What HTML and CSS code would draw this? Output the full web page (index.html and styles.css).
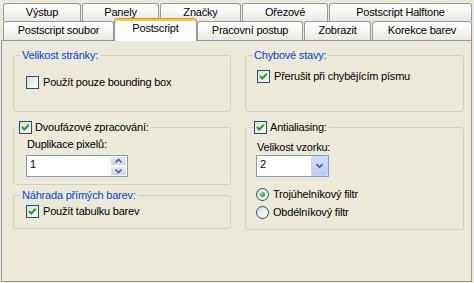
FILE: index.html
```html
<!DOCTYPE html>
<html>
<head>
<meta charset="utf-8">
<link rel="stylesheet" href="styles.css">
</head>
<body>
<div class="tabctl">
  <div class="tabrow row1">
    <div class="tab t-vystup">Výstup</div>
    <div class="tab t-panely">Panely</div>
    <div class="tab t-znacky">Značky</div>
    <div class="tab t-orez">Ořezové</div>
    <div class="tab t-half">Postscript Halftone</div>
  </div>
  <div class="tabrow row2">
    <div class="tab t-soubor">Postscript soubor</div>
    <div class="tab active t-ps">Postscript</div>
    <div class="tab t-prac">Pracovní postup</div>
    <div class="tab t-zobr">Zobrazit</div>
    <div class="tab t-kor">Korekce barev</div>
  </div>
  <div class="page">
    <div class="col">
      <fieldset class="grp g-size">
        <legend class="cap">Velikost stránky:</legend>
        <div class="body b-size">
          <label class="chk"><span class="box"></span>Použít pouze bounding box</label>
        </div>
      </fieldset>
      <fieldset class="grp g-two">
        <legend class="cap-chk l-two">
          <label class="chk tight"><span class="box"><svg viewBox="0 0 11 11"><polyline points="2,5 4.3,7.4 8.8,2.8"/></svg></span>Dvoufázové zpracování:</label>
        </legend>
        <div class="body b-two">
          <div class="lbl">Duplikace pixelů:</div>
          <div class="spin">
            <div class="val">1</div>
            <div class="btns">
              <div class="sbtn"><svg viewBox="0 0 15 8"><polyline points="4.5,5.5 7.5,2.5 10.5,5.5"/></svg></div>
              <div class="sbtn"><svg viewBox="0 0 15 8"><polyline points="4.5,2.5 7.5,5.5 10.5,2.5"/></svg></div>
            </div>
          </div>
        </div>
      </fieldset>
      <fieldset class="grp g-repl">
        <legend class="cap">Náhrada přímých barev:</legend>
        <div class="body b-repl">
          <label class="chk"><span class="box"><svg viewBox="0 0 11 11"><polyline points="2,5 4.3,7.4 8.8,2.8"/></svg></span>Použít tabulku barev</label>
        </div>
      </fieldset>
    </div>
    <div class="col">
      <fieldset class="grp g-err">
        <legend class="cap l-err">Chybové stavy:</legend>
        <div class="body b-err">
          <label class="chk"><span class="box"><svg viewBox="0 0 11 11"><polyline points="2,5 4.3,7.4 8.8,2.8"/></svg></span>Přerušit při chybějícím písmu</label>
        </div>
      </fieldset>
      <fieldset class="grp g-aa">
        <legend class="cap-chk l-aa">
          <label class="chk tight"><span class="box"><svg viewBox="0 0 11 11"><polyline points="2,5 4.3,7.4 8.8,2.8"/></svg></span>Antialiasing:</label>
        </legend>
        <div class="body b-aa">
          <div class="lbl">Velikost vzorku:</div>
          <div class="combo">
            <div class="val">2</div>
            <div class="dd"><svg viewBox="0 0 17 20"><polyline points="5,8 8.5,11.5 12,8"/></svg></div>
          </div>
          <label class="rad r1"><span class="dot on"></span>Trojúhelníkový filtr</label>
          <label class="rad r2"><span class="dot"></span>Obdélníkový filtr</label>
        </div>
      </fieldset>
    </div>
  </div>
</div>
</body>
</html>
```

FILE: styles.css
```css
* { box-sizing: border-box; }

body {
  margin: 0;
  width: 474px;
  height: 283px;
  overflow: hidden;
  background: #ECE9D8;
  font-family: "Liberation Sans", Arial, sans-serif;
  font-size: 11px;
  letter-spacing: -0.2px;
  color: #000;
}

.tabrow {
  display: flex;
  padding-left: 3px;
}

.row1 {
  padding-top: 3px;
  height: 21px;
}

.row2 {
  height: 19px;
  align-items: flex-end;
}

.tab {
  flex: none;
  text-align: center;
  white-space: nowrap;
  border: 1px solid #919B9C;
  border-bottom: none;
  border-radius: 3px 3px 0 0;
  background: linear-gradient(to bottom, #FFFFFF 0%, #F7F7F4 45%, #E9E8E1 100%);
}

.row1 .tab { height: 18px; line-height: 17px; }
.row2 .tab { height: 19px; line-height: 17px; }

.t-vystup { width: 78px; margin-right: 1px; }
.t-panely { width: 77px; margin-right: 1px; }
.t-znacky { width: 81px; margin-right: 1px; }
.t-orez { width: 86px; margin-right: 1px; }
.t-half { width: 143px; }

.t-soubor { width: 111px; }
.t-ps { width: 83px; }
.t-prac { width: 106px; margin-right: 1px; }
.t-zobr { width: 67px; margin-right: 1px; }
.t-kor { width: 100px; }

.row2 .tab.active {
  position: relative;
  z-index: 2;
  height: 23px;
  margin-bottom: -1px;
  line-height: 19px;
  background: #FCFCFE;
  border-top: 1px solid #E68B2C;
  box-shadow: inset 0 2px 0 #FFC73C;
}

.page {
  margin-left: 1px;
  width: 471px;
  height: 242px;
  border: 1px solid #919B9C;
  padding: 8px 0 0 11px;
  display: grid;
  grid-template-columns: 218px 219px;
  column-gap: 14px;
  align-items: start;
}

.col {
  display: flex;
  flex-direction: column;
}

.grp {
  margin: 0;
  padding: 0;
  min-width: 0;
  border: 1px solid #D0D0BF;
  border-radius: 3px;
}

.grp legend {
  padding: 0 2px;
  margin-left: 6px;
  line-height: 13px;
  height: 13px;
}

.cap { color: #0046D5; }
.l-err { margin-left: 7px; }

.grp legend.l-two { margin-left: 5px; padding: 0 2px 0 0; }
.grp legend.l-aa { margin-left: 8px; padding: 0 2px 0 0; }

.g-size { margin-bottom: 9px; }
.g-two { margin-bottom: 4px; }
.g-err { margin-bottom: 9px; }

.b-size { padding: 14px 0 22px 12px; }
.b-two { padding: 4px 0 7px 12px; }
.b-repl { padding: 3px 0 10px 12px; }
.b-err { padding: 8px 0 28px 11px; }
.b-aa { padding: 7px 0 10px 10px; }

.chk, .rad {
  display: flex;
  align-items: center;
  height: 13px;
  line-height: 13px;
  gap: 4px;
  white-space: nowrap;
}

.chk.tight { gap: 3px; }

.box {
  flex: none;
  width: 13px;
  height: 13px;
  border: 1px solid #1C5180;
  background: linear-gradient(135deg, #DCDCD7 0%, #F2F2EE 60%, #FFFFFF 100%);
  display: block;
}

.box svg {
  display: block;
  width: 11px;
  height: 11px;
}

.box polyline {
  fill: none;
  stroke: #21A121;
  stroke-width: 2.1;
}

.lbl {
  line-height: 13px;
  height: 13px;
  padding-left: 1px;
}

.spin {
  margin-top: 4px;
  width: 102px;
  height: 22px;
  border: 1px solid #7F9DB9;
  background: #fff;
  display: flex;
}

.spin .val, .combo .val {
  flex: 1;
  padding-left: 3px;
  line-height: 17px;
}

.btns {
  width: 17px;
  display: flex;
  flex-direction: column;
}

.sbtn {
  height: 10px;
  border: 1px solid #FFFFFF;
  border-radius: 2px;
  background: linear-gradient(to bottom, #E1E9FC 0%, #C9D6F6 100%);
}

.sbtn svg {
  display: block;
  width: 15px;
  height: 8px;
}

.sbtn polyline, .dd polyline {
  fill: none;
  stroke: #4D6185;
  stroke-width: 1.6;
}

.combo {
  margin-top: 1px;
  width: 73px;
  height: 22px;
  border: 1px solid #7F9DB9;
  background: #fff;
  display: flex;
}

.dd {
  width: 17px;
  height: 20px;
  border: 1px solid #C4D3F6;
  border-radius: 2px;
  background: linear-gradient(to bottom, #D2DFFD 0%, #B9CDF8 100%);
}

.dd svg {
  display: block;
  width: 15px;
  height: 18px;
}

.dd polyline { stroke-width: 2; }

.r1 { margin-top: 11px; }
.r2 { margin-top: 5px; }

.dot {
  flex: none;
  width: 13px;
  height: 13px;
  border-radius: 50%;
  border: 1px solid #1C5180;
  background: linear-gradient(135deg, #DCDCD7 0%, #F2F2EE 60%, #FFFFFF 100%);
  display: flex;
  align-items: center;
  justify-content: center;
}

.dot.on::after {
  content: "";
  width: 5px;
  height: 5px;
  border-radius: 50%;
  background: radial-gradient(circle at 35% 35%, #7BE07A 0%, #2FB22F 60%, #1E9A1E 100%);
}
```
